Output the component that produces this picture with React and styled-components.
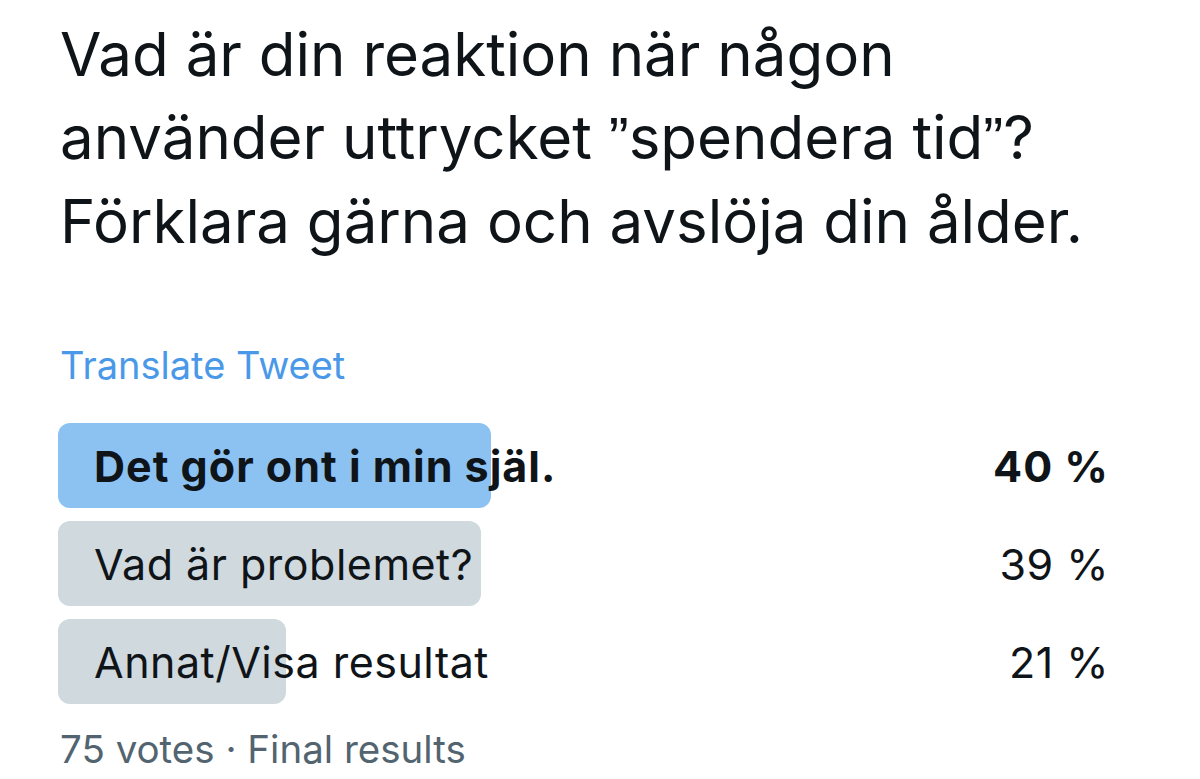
import React from "react";
import styled, { createGlobalStyle } from "styled-components";

const Global = createGlobalStyle`
  body {
    margin: 0;
    background: #ffffff;
    font-family: "Inter", "Liberation Sans", sans-serif;
    color: #0f1419;
  }
`;

const Page = styled.div`
  padding: 13px 91px 0 58px;
`;

const Title = styled.h1`
  margin: 0 0 0 2px;
  font-size: 60px;
  line-height: 83px;
  font-weight: 400;
`;

const Quote = styled.span`
  font-family: "Liberation Sans", sans-serif;
`;

const Translate = styled.div`
  margin: 78px 0 0 2px;
  font-size: 38px;
  line-height: 48px;
  color: #4a99e9;
`;

const Poll = styled.div`
  margin-top: 34px;
  display: flex;
  flex-direction: column;
  gap: 13px;
`;

const Option = styled.div`
  position: relative;
  height: 85px;
  display: flex;
  align-items: center;
  justify-content: space-between;
  font-size: 43px;
  font-weight: ${(p) => (p.$winner ? 700 : 400)};
  letter-spacing: ${(p) => (p.$winner ? "1px" : "0.5px")};
`;

const Bar = styled.div`
  position: absolute;
  left: 0;
  top: 0;
  bottom: 0;
  border-radius: 12px;
  background: ${(p) => (p.$winner ? "#8cc2f2" : "#cfd9de")};
`;

const Label = styled.span`
  position: relative;
  padding-left: 36px;
`;

const Percent = styled.span`
  position: relative;
`;

const Footer = styled.div`
  margin: 21px 0 0 2px;
  font-size: 38.5px;
  line-height: 48px;
  color: #536471;
`;

const options = [
  { label: "Det gör ont i min själ.", pct: 40, bar: 433, winner: true },
  { label: "Vad är problemet?", pct: 39, bar: 423 },
  { label: "Annat/Visa resultat", pct: 21, bar: 228 },
];

export default function App() {
  return (
    <Page>
      <Global />
      <Title>
        Vad är din reaktion när någon
        <br />
        använder uttrycket <Quote>”</Quote>spendera tid<Quote>”</Quote>?
        <br />
        Förklara gärna och avslöja din ålder.
      </Title>
      <Translate>Translate Tweet</Translate>
      <Poll>
        {options.map((o) => (
          <Option key={o.label} $winner={o.winner}>
            <Bar $winner={o.winner} style={{ width: o.bar }} />
            <Label>{o.label}</Label>
            <Percent>{o.pct} %</Percent>
          </Option>
        ))}
      </Poll>
      <Footer>75 votes · Final results</Footer>
    </Page>
  );
}
